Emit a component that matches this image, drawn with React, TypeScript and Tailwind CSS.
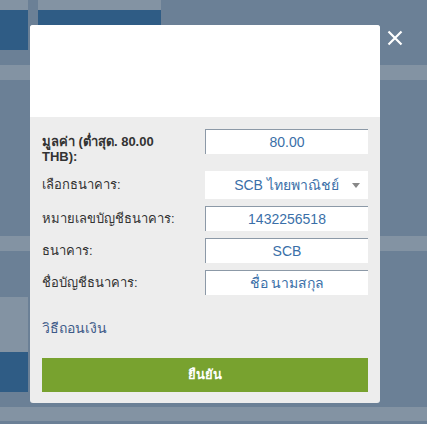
export default function App() {
  const rows = [
    { label: 'เลือกธนาคาร:', value: 'SCB ไทยพาณิชย์', select: true },
    { label: 'หมายเลขบัญชีธนาคาร:', value: '1432256518' },
    { label: 'ธนาคาร:', value: 'SCB' },
    { label: 'ชื่อบัญชีธนาคาร:', value: 'ชื่อ นามสกุล' },
  ];

  return (
    <div className="relative w-[427px] h-[424px] overflow-hidden bg-[#6b8096] font-['Liberation_Sans',Tahoma,sans-serif]">
      {/* page behind the modal */}
      <div className="flex flex-col">
        <div className="flex gap-[10px] h-[10px]">
          <div className="w-[28px] bg-[#8393a3]" />
          <div className="w-[123px] bg-[#8393a3]" />
        </div>
        <div className="flex gap-[10px] h-[40px]">
          <div className="w-[28px] bg-[#2f5c85]" />
          <div className="w-[123px] bg-[#2f5c85]" />
        </div>
        <div className="h-[15px]" />
        <div className="h-[15px] bg-[#8393a3]" />
        <div className="h-[156px]" />
        <div className="h-[15px] bg-[#8393a3]" />
        <div className="h-[46px]" />
        <div className="h-[55px] w-[28px] bg-[#8393a3]" />
        <div className="h-[40px] w-[28px] bg-[#2f5c85]" />
        <div className="h-[15px]" />
        <div className="h-[14px] bg-[#8393a3]" />
      </div>

      {/* close */}
      <button className="absolute left-[387px] top-[30px] w-[16px] h-[16px]" aria-label="close">
        <svg viewBox="0 0 16 16" className="w-[16px] h-[16px]">
          <path d="M1.5 1.5L14.5 14.5M14.5 1.5L1.5 14.5" stroke="white" strokeWidth="2.2" />
        </svg>
      </button>

      {/* modal */}
      <div className="absolute left-[30px] top-[25px] w-[350px] h-[378px] rounded-[3px] overflow-hidden bg-[#ededed] flex flex-col">
        <div className="h-[92px] bg-white shrink-0" />
        <div className="px-[12px] pt-[12px] flex flex-col">
          <div className="flex items-start">
            <div className="w-[163px] pt-[5px] pr-[38px] text-[13px] leading-[15px] font-bold text-[#333]">
              มูลค่า (ต่ำสุด. 80.00 THB):
            </div>
            <div className="w-[163px] h-[25px] bg-white border-t border-l border-[#8c99a7] flex items-center justify-center text-[14px] text-[#3a6fa8]">
              80.00
            </div>
          </div>
          {rows.map((r, i) => (
            <div key={i} className="flex items-center mt-[7px]">
              <div className="w-[163px] text-[13px] text-[#333]">{r.label}</div>
              <div
                className={`relative w-[163px] ${r.select ? 'h-[28px]' : 'h-[25px] border-t border-l border-[#8c99a7]'} bg-white flex items-center justify-center text-[14px] text-[#3a6fa8]`}
              >
                {r.value}
                {r.select && (
                  <svg viewBox="0 0 8 5" className="absolute right-[8px] top-[12px] w-[8px] h-[5px]">
                    <path d="M0 0H8L4 5Z" fill="#888" />
                  </svg>
                )}
              </div>
            </div>
          ))}
          <div className="mt-[23px] text-[14px] text-[#3d5a88]">วิธีถอนเงิน</div>
          <button className="mt-[19px] h-[34px] w-full bg-[#78a22f] text-white text-[13px] font-bold">
            ยืนยัน
          </button>
        </div>
      </div>
    </div>
  );
}
